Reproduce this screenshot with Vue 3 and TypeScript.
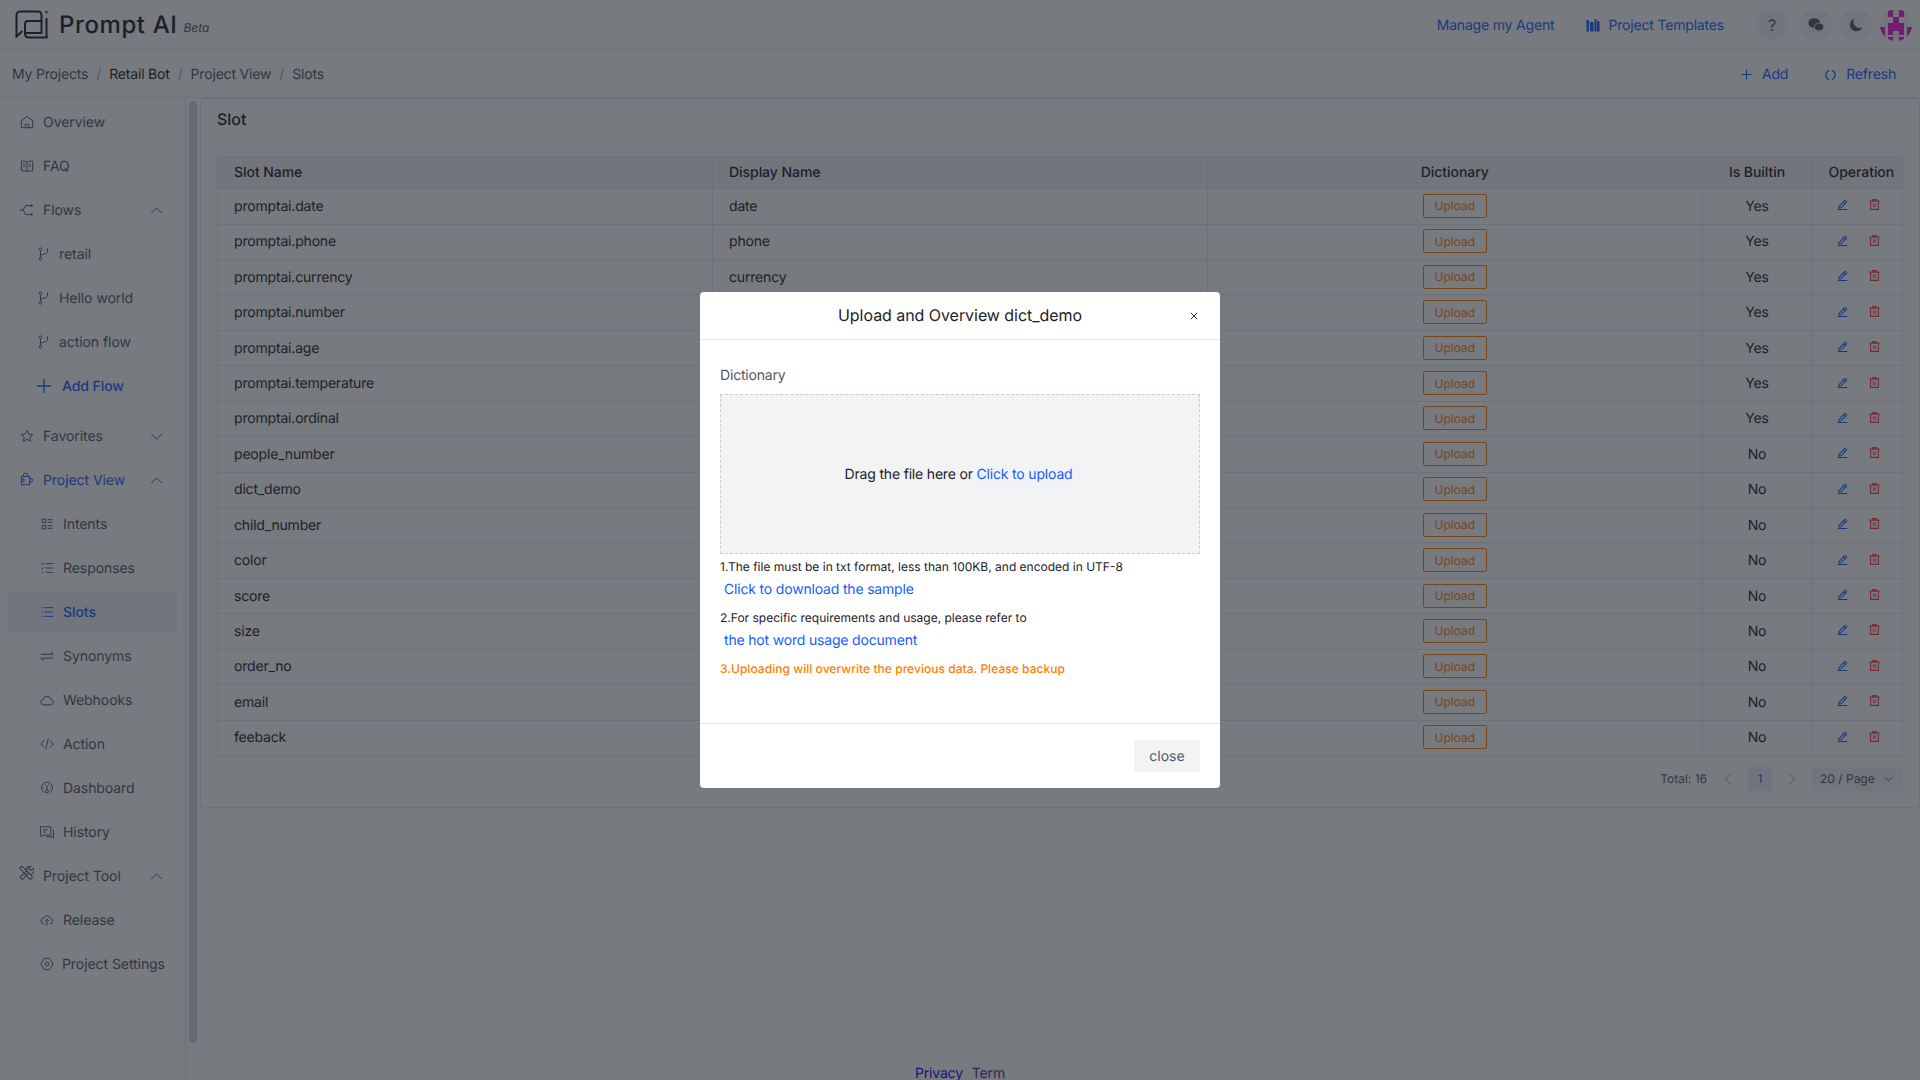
<script setup lang="ts">
interface Slot {
  name: string;
  display: string;
  builtin: boolean;
}

const slots: Slot[] = [
  { name: 'promptai.date', display: 'date', builtin: true },
  { name: 'promptai.phone', display: 'phone', builtin: true },
  { name: 'promptai.currency', display: 'currency', builtin: true },
  { name: 'promptai.number', display: 'number', builtin: true },
  { name: 'promptai.age', display: 'age', builtin: true },
  { name: 'promptai.temperature', display: 'temperature', builtin: true },
  { name: 'promptai.ordinal', display: 'ordinal', builtin: true },
  { name: 'people_number', display: 'people_number', builtin: false },
  { name: 'dict_demo', display: 'dict_demo', builtin: false },
  { name: 'child_number', display: 'child_number', builtin: false },
  { name: 'color', display: 'color', builtin: false },
  { name: 'score', display: 'score', builtin: false },
  { name: 'size', display: 'size', builtin: false },
  { name: 'order_no', display: 'order_no', builtin: false },
  { name: 'email', display: 'email', builtin: false },
  { name: 'feeback', display: 'feeback', builtin: false },
];

const flows = ['retail', 'Hello world', 'action flow'];

const viewItems = [
  { label: 'Intents', icon: 'M2.500 2.500h4v4h-4zM2.500 9.500h4v4h-4zM8.500 3h6M8.500 6h6M8.500 10h6M8.500 13h6' },
  { label: 'Responses', icon: 'M1.500 3l1 1 1.500-2M1.500 8l1 1 1.500-2M6.500 3H15M6.500 8H15M6.500 13H15M2 13h1.500' },
  { label: 'Slots', icon: 'M5 3h10M5 8h10M5 13h10M1.500 3h1.500M1.500 8h1.500M1.500 13h1.500', active: true },
  { label: 'Synonyms', icon: 'M1 6h14l-3-3M15 10.500H1l3 3' },
  { label: 'Webhooks', icon: 'M4.500 13.500a3.200 3.200 0 0 1-.5-6.400 4.200 4.200 0 0 1 8.200 0 3.200 3.200 0 0 1-.5 6.400z' },
  { label: 'Action', icon: 'M4.500 4L1 8l3.500 4M11.500 4L15 8l-3.500 4M9.500 2L6.500 14' },
  { label: 'Dashboard', icon: 'M5 13.200A6.300 6.300 0 1 1 11 13.200M8 5v5M5.500 4v1M3 7.500h1M12 7.500h1M10.500 4v1M8 10a1.700 1.700 0 1 0 0 3.400A1.700 1.700 0 0 0 8 10z' },
  { label: 'History', icon: 'M.5 2h12v9.500H4.500L1.500 13.500l-1-.5zM15.500 5v10l-2-1.500H7M3.500 5.500H9M3.500 8H6.500' },
];
</script>

<template>
  <div class="page">
    <header class="topbar">
      <div class="brand">
        <svg class="brand-logo" viewBox="0 0 36 30" fill="none" stroke="#1d2129" stroke-width="2">
          <path d="M1.500 26V5A3.500 3.500 0 0 1 5 1.500H23A3.500 3.500 0 0 1 26.500 5V24" />
          <path d="M1.500 26v.5L7.500 21" />
          <path d="M10 24V14a3 3 0 0 1 3-3H26.500" />
          <path d="M10 23H26.500" />
          <path d="M10 24a3.500 3.500 0 0 0 3.500 3.500H32.500L31.500 27" />
          <path d="M31.500 8V27.500" />
          <circle cx="31.500" cy="2" r="1.500" fill="#e5383b" stroke="none" />
        </svg>
        <span class="brand-name">Prompt AI</span>
        <span class="brand-tag">Beta</span>
      </div>
      <div class="top-actions">
        <a class="top-link">Manage my Agent</a>
        <a class="top-link templates">
          <svg width="14" height="14" viewBox="0 0 14 14" fill="#165dff">
            <path d="M.5 2h2.500v11.500H.5zM4 4h3.500v9.500H4zM4.800 6h2v1h-2zM8.500 1h2v12.500h-2zM11 3h2.500v10.500H11z" />
          </svg>
          Project Templates
        </a>
        <span class="round-btn q">?</span>
        <span class="round-btn wechat">
          <svg width="16" height="16" viewBox="0 0 16 16" fill="#4e5969">
            <ellipse cx="6.200" cy="6" rx="5.800" ry="4.800" />
            <ellipse cx="11" cy="10" rx="4.800" ry="3.900" stroke="#f2f3f5" stroke-width=".8" />
          </svg>
        </span>
        <span class="round-btn moon">
          <svg width="16" height="16" viewBox="0 0 16 16" fill="#4e5969">
            <path d="M6.500 1.500a6.500 6.500 0 1 0 8 8.500A6 6 0 0 1 6.500 1.500z" />
          </svg>
        </span>
        <svg class="avatar" viewBox="0 0 32 32">
          <clipPath id="avatarClip"><circle cx="16" cy="16" r="16" /></clipPath>
          <g clip-path="url(#avatarClip)">
            <circle cx="16" cy="16" r="16" fill="#f2f2f2" />
            <path fill="#f014d6" d="M8 1h5v7H8zM19 1h5v7h-5zM13 8h6v6h-6zM8 14h16v8H8zM8 22h5v4H8zM19 22h5v4h-5zM0 18h5v10H0zM27 18h5v10h-5zM8 28h5v4H8zM19 28h5v4h-5z" />
          </g>
        </svg>
      </div>
    </header>

    <div class="crumbbar">
      <nav class="crumbs">
        <span>My Projects</span><i>/</i>
        <span class="strong">Retail Bot</span><i>/</i>
        <span>Project View</span><i>/</i>
        <span>Slots</span>
      </nav>
      <div class="crumb-actions">
        <a class="top-link add">
          <svg width="11" height="11" viewBox="0 0 12 12" fill="none" stroke="#165dff" stroke-width="1.100">
            <path d="M6 .5v11M.5 6h11" />
          </svg>
          Add
        </a>
        <a class="top-link refresh">
          <svg width="11" height="12" viewBox="0 0 12 12" fill="none" stroke="#165dff" stroke-width="1.300">
            <path d="M4.500 1.200a5 5 0 0 0 0 9.600M7.500 1.200a5 5 0 0 1 0 9.600" />
          </svg>
          Refresh
        </a>
      </div>
    </div>

    <div class="main">
      <aside class="sidebar">
        <div class="nav-item">
          <svg class="ico" viewBox="0 0 16 16"><path d="M1.500 6.500L8 1.500l6.500 5V14.500h-13zM6 14.500V10.500h4v4" /></svg>
          Overview
        </div>
        <div class="nav-item">
          <svg class="ico" viewBox="0 0 16 16"><path d="M8 3.500C6.500 2.500 4 2.300 1.500 2.500v11c2.500-.2 5 0 6.500 1 1.500-1 4-1.200 6.500-1v-11c-2.500-.2-5 0-6.500 1zM8 3.500V14.500M3.500 6h2.500M3.500 8.500h2.500M10 6h2.500M10 8.500h2.500" /></svg>
          FAQ
        </div>
        <div class="nav-item">
          <svg class="ico wide" viewBox="0 0 16 16"><path d="M0 8h4l3-5h8M4 8l3 5h8M13 1.500L15 3l-2 1.500M13 11.500l2 1.500-2 1.500" /></svg>
          Flows
          <svg class="chev" viewBox="0 0 14 8"><path d="M1 7l6-6 6 6" /></svg>
        </div>
        <div v-for="flow in flows" :key="flow" class="nav-item sub flow">
          <svg class="ico" viewBox="0 0 16 16"><path d="M4 4v8M4 10.500c0-3 8-1.500 8-5.500M2.500 2.500a1.500 1.500 0 1 0 3 0 1.500 1.500 0 1 0-3 0M2.500 13.500a1.500 1.500 0 1 0 3 0 1.500 1.500 0 1 0-3 0M12 1.500V5" /></svg>
          {{ flow }}
        </div>
        <div class="nav-item sub flow add-flow">
          <svg class="plus" viewBox="0 0 14 14"><path d="M7 0v14M0 7h14" /></svg>
          Add Flow
        </div>
        <div class="nav-item favorites">
          <svg class="ico" viewBox="0 0 16 16"><path d="M8 1.500l2 4.300 4.600.6-3.400 3.100.9 4.600L8 11.800 3.900 14l.9-4.600-3.400-3.100 4.600-.6z" /></svg>
          Favorites
          <svg class="chev" viewBox="0 0 14 8"><path d="M1 1l6 6 6-6" /></svg>
        </div>
        <div class="nav-item open">
          <svg class="ico lift" viewBox="0 0 16 16"><path d="M1.500 5h9.500v9.500H1.500zM4 5V3a1.500 1.500 0 0 1 1.500-1.500H7A1.500 1.500 0 0 1 8.500 3v2M11 7.500h1.500a2 2 0 0 1 0 4H11M1.500 8H4.500v3h-3" /></svg>
          Project View
          <svg class="chev" viewBox="0 0 14 8"><path d="M1 7l6-6 6 6" /></svg>
        </div>
        <div
          v-for="item in viewItems"
          :key="item.label"
          class="nav-item sub"
          :class="{ active: item.active }"
        >
          <svg class="ico" viewBox="0 0 16 16"><path :d="item.icon" /></svg>
          {{ item.label }}
        </div>
        <div class="nav-item">
          <svg class="ico tool" viewBox="0 0 16 16"><path d="M2 1L.8 2.500l9.700 10.700a2 2 0 0 0 3-2.700L3.500.5zM15 2.500l-2 2-1.800-.5-.5-1.800 2-2a3.500 3.500 0 0 0-4.200 4.600L1 12l2.500 2.500 6.500-7a3.500 3.500 0 0 0 5-5z" /></svg>
          Project Tool
          <svg class="chev" viewBox="0 0 14 8"><path d="M1 7l6-6 6 6" /></svg>
        </div>
        <div class="nav-item sub">
          <svg class="ico" viewBox="0 0 16 16"><path d="M5 12.500a3.500 3.500 0 0 1-.5-7A4 4 0 0 1 12 6a3.300 3.300 0 0 1-.5 6.500M8 14.500V7M5.800 9.200L8 7l2.200 2.200" /></svg>
          Release
        </div>
        <div class="nav-item sub settings">
          <svg class="ico" viewBox="0 0 16 16"><path d="M5 1.500h6L15 8l-4 6.500H5L1 8zM8 5.800a2.200 2.200 0 1 0 0 4.400 2.200 2.200 0 1 0 0-4.400z" /></svg>
          Project Settings
        </div>
      </aside>
      <div class="scroll-track"><div class="scroll-thumb"></div></div>

      <main class="content">
        <section class="card">
          <h2 class="card-title">Slot</h2>
          <div class="table">
            <div class="row head">
              <div class="cell name">Slot Name</div>
              <div class="cell name">Display Name</div>
              <div class="cell dict center">Dictionary</div>
              <div class="cell builtin center">Is Builtin</div>
              <div class="cell op">Operation</div>
            </div>
            <div v-for="slot in slots" :key="slot.name" class="row">
              <div class="cell name">{{ slot.name }}</div>
              <div class="cell name">{{ slot.display }}</div>
              <div class="cell dict center"><span class="upload">Upload</span></div>
              <div class="cell builtin center">{{ slot.builtin ? 'Yes' : 'No' }}</div>
              <div class="cell op ops">
                <svg class="edit" viewBox="0 0 12 12"><path d="M2.200 8.200L8 2a1.200 1.200 0 0 1 1.700 0l.3.300a1.200 1.200 0 0 1 0 1.700L4.300 9.600l-2.300.4zM7 3.200L8.800 5M.8 11.500h10.400" /></svg>
                <svg class="trash" viewBox="0 0 12 12"><path d="M.5 2.300h11M4 2.200V.7h4V2.200M1.700 2.300v9h8.600v-9" /><path class="trash-fill" d="M4 4.500h4v4.500H4z" /></svg>
              </div>
            </div>
          </div>
          <div class="pager">
            <span class="total">Total: 16</span>
            <svg class="pg-arrow" viewBox="0 0 8 12"><path d="M6.500 1L1.500 6l5 5" /></svg>
            <span class="pg-num">1</span>
            <svg class="pg-arrow" viewBox="0 0 8 12"><path d="M1.500 1l5 5-5 5" /></svg>
            <span class="pg-size">
              20 / Page
              <svg class="pg-chev" viewBox="0 0 12 8"><path d="M1 1.500l5 5 5-5" /></svg>
            </span>
          </div>
        </section>
        <footer class="foot">
          <a class="privacy">Privacy</a>
          <a class="term">Term</a>
        </footer>
      </main>
    </div>

    <div class="mask">
      <div class="modal">
        <div class="modal-head">
          <span class="modal-title">Upload and Overview dict_demo</span>
          <svg class="modal-x" viewBox="0 0 10 10"><path d="M1 1l8 8M9 1l-8 8" /></svg>
        </div>
        <div class="modal-body">
          <div class="field-label">Dictionary</div>
          <div class="drop">
            <span>Drag the file here or <a class="blue">Click to upload</a></span>
          </div>
          <div class="tip first">1.The file must be in txt format, less than 100KB, and encoded in UTF-8</div>
          <a class="doc blue">Click to download the sample</a>
          <div class="tip">2.For specific requirements and usage, please refer to</div>
          <a class="doc blue">the hot word usage document</a>
          <div class="tip warn">3.Uploading will overwrite the previous data. Please backup</div>
        </div>
        <div class="modal-foot">
          <button class="close-btn">close</button>
        </div>
      </div>
    </div>
  </div>
</template>

<style>
html,
body {
  margin: 0;
  overflow: hidden;
}
</style>

<style scoped>
.page {
  position: relative;
  width: 1920px;
  height: 1080px;
  overflow: hidden;
  display: flex;
  flex-direction: column;
  background: #fff;
  font-family: Inter, "Liberation Sans", sans-serif;
  font-size: 14px;
  letter-spacing: -0.18px;
  color: #1d2129;
  text-rendering: geometricPrecision;
}

.topbar {
  height: 50px;
  flex: none;
  box-sizing: border-box;
  display: flex;
  align-items: center;
  justify-content: space-between;
  padding: 0 8px 0 15px;
  border-bottom: 1px solid #e5e6eb;
}

.brand {
  display: flex;
  align-items: center;
}

.brand-logo {
  width: 36px;
  height: 30px;
}

.brand-name {
  margin-left: 8px;
  font-size: 24px;
  font-weight: 500;
  letter-spacing: 0.6px;
}

.brand-tag {
  margin: 6px 0 0 6px;
  font-size: 12px;
  font-style: italic;
  letter-spacing: 0;
  color: #4e5969;
}

.top-actions {
  display: flex;
  align-items: center;
}

.top-link {
  display: inline-flex;
  align-items: center;
  padding-top: 1px;
  color: #165dff;
}

.templates {
  margin-left: 32px;
  gap: 8px;
}

.round-btn {
  width: 32px;
  height: 32px;
  border-radius: 50%;
  background: #f2f3f5;
  display: flex;
  align-items: center;
  justify-content: center;
  color: #4e5969;
}

.q {
  margin-left: 32px;
  font-size: 16px;
}

.wechat {
  margin-left: 12px;
}

.moon {
  margin-left: 8px;
}

.avatar {
  width: 32px;
  height: 32px;
  margin-left: 8px;
}

.crumbbar {
  height: 48px;
  flex: none;
  box-sizing: border-box;
  display: flex;
  align-items: center;
  justify-content: space-between;
  padding: 1px 24px 0 12px;
  border-bottom: 1px solid #e5e6eb;
}

.crumbs {
  display: flex;
  align-items: center;
  color: #4e5969;
}

.crumbs i {
  font-style: normal;
  margin: 0 8px;
  color: #a9aeb8;
}

.crumbs .strong {
  color: #1d2129;
}

.crumb-actions {
  display: flex;
  align-items: center;
  gap: 37px;
}

.add,
.refresh {
  gap: 10px;
}

.main {
  flex: 1;
  min-height: 0;
  display: flex;
}

.sidebar {
  width: 186px;
  flex: none;
  box-sizing: border-box;
  padding: 4px 8px 0;
  border-right: 1px solid #e5e6eb;
  letter-spacing: -0.07px;
}

.nav-item {
  position: relative;
  height: 40px;
  margin-top: 4px;
  box-sizing: border-box;
  padding-left: 12px;
  display: flex;
  align-items: center;
  color: #4e5969;
}

.nav-item:first-child {
  margin-top: 0;
}

.ico {
  width: 14px;
  height: 14px;
  margin-right: 9px;
  flex: none;
  fill: none;
  stroke: currentColor;
  stroke-width: 1.100;
}

.ico.wide {
  width: 15px;
  margin-left: -1px;
}

.ico.lift {
  margin-top: -3px;
}

.ico.tool {
  width: 15px;
  height: 15px;
  margin: -6px 9px 0 -1px;
}

.chev {
  position: absolute;
  right: 14px;
  width: 13px;
  height: 7px;
  fill: none;
  stroke: currentColor;
  stroke-width: 1.100;
}

.sub {
  padding-left: 32px;
}

.sub .ico {
  margin-right: 9px;
}

.flow {
  padding-left: 29px;
}

.flow .ico {
  margin-right: 8px;
}

.add-flow,
.open,
.active {
  color: #165dff;
}

.add-flow {
  font-weight: 500;
}

.plus {
  width: 14px;
  height: 14px;
  margin-right: 11px;
  fill: none;
  stroke: currentColor;
  stroke-width: 1.300;
}

.favorites {
  margin-top: 10px;
}

.active {
  background: #f2f3f5;
  font-weight: 500;
}

.settings .ico {
  margin-right: 8px;
}

.scroll-track {
  width: 14px;
  flex: none;
  box-sizing: border-box;
  padding: 3px 3px 0;
}

.scroll-thumb {
  height: 942px;
  background: #d4d6d9;
  border-radius: 4px;
}

.content {
  flex: 1;
  min-width: 0;
  display: flex;
  flex-direction: column;
}

.card {
  box-sizing: border-box;
  height: 710px;
  flex: none;
  padding: 0 16px;
  border: 1px solid #e5e6eb;
  border-radius: 4px;
}

.card-title {
  margin: 0;
  height: 56.500px;
  padding-top: 8px;
  box-sizing: border-box;
  font-size: 16px;
  font-weight: 500;
  line-height: 24px;
  letter-spacing: 0;
}

.table {
  border: 1px solid #e5e6eb;
  border-bottom: 0;
  border-radius: 4px 4px 0 0;
}

.row {
  display: flex;
  height: 35.430px;
  box-sizing: border-box;
  border-bottom: 1px solid #e5e6eb;
}

.row.head {
  height: 32.700px;
  padding-top: 1px;
  background: #f2f3f5;
  font-weight: 500;
  letter-spacing: -0.05px;
}

.cell {
  box-sizing: border-box;
  display: flex;
  align-items: center;
  padding: 0 16px;
  border-right: 1px solid #e5e6eb;
  white-space: nowrap;
  overflow: hidden;
}

.cell:last-child {
  border-right: 0;
}

.center {
  justify-content: center;
  padding: 0;
}

.name {
  width: 495px;
}

.dict {
  width: 494.500px;
}

.builtin {
  width: 110px;
}

.op {
  flex: 1;
  padding: 0 0 0 16px;
}

.upload {
  box-sizing: border-box;
  width: 64px;
  height: 24px;
  margin-top: -1px;
  border: 1px solid #ff7d00;
  border-radius: 2px;
  color: #ff7d00;
  font-size: 12px;
  font-weight: 400;
  letter-spacing: 0;
  display: flex;
  align-items: center;
  justify-content: center;
}

.ops {
  gap: 21.500px;
  padding: 0 0 3px 24px;
}

.edit {
  width: 11px;
  height: 11px;
  fill: none;
  stroke: #165dff;
  stroke-width: 1.200;
}

.trash {
  width: 11px;
  height: 11px;
  fill: none;
  stroke: #f53f3f;
  stroke-width: 1.200;
}

.trash-fill {
  fill: #f53f3f;
  opacity: 0.5;
  stroke: none;
}

.pager {
  display: flex;
  align-items: center;
  justify-content: flex-end;
  height: 28px;
  margin-top: 9px;
  font-size: 12px;
  letter-spacing: 0;
  color: #4e5969;
}

.total {
  margin-right: 17px;
}

.pg-arrow {
  width: 8px;
  height: 12px;
  fill: none;
  stroke: #a9aeb8;
  stroke-width: 1;
}

.pg-num {
  width: 24px;
  height: 24px;
  margin: 0 16px;
  display: flex;
  align-items: center;
  justify-content: center;
  background: #e8f3ff;
  color: #165dff;
  border-radius: 2px;
}

.pg-size {
  width: 91px;
  height: 24px;
  margin-left: 16px;
  box-sizing: border-box;
  padding: 0 10px 0 8px;
  display: flex;
  align-items: center;
  justify-content: space-between;
  background: #f2f3f5;
  border-radius: 2px;
}

.pg-chev {
  width: 9px;
  height: 6px;
  fill: none;
  stroke: #4e5969;
  stroke-width: 1.100;
}

.foot {
  margin-top: auto;
  height: 16px;
  display: flex;
  justify-content: center;
  gap: 9px;
  margin-right: 200px;
  line-height: 20px;
}

.privacy {
  color: #0000ee;
}

.term {
  color: #551a8b;
}

.mask {
  position: absolute;
  inset: 0;
  background: rgba(29, 33, 41, 0.6);
}

.modal {
  position: absolute;
  left: 700px;
  top: 292px;
  width: 520px;
  height: 496px;
  display: flex;
  flex-direction: column;
  background: #fff;
  border-radius: 4px;
}

.modal-head {
  position: relative;
  height: 48px;
  flex: none;
  box-sizing: border-box;
  display: flex;
  align-items: center;
  justify-content: center;
  border-bottom: 1px solid #e5e6eb;
}

.modal-title {
  font-size: 16px;
  font-weight: 400;
  letter-spacing: -0.05px;
  margin-top: -1px;
}

.modal-x {
  position: absolute;
  right: 22px;
  top: 20px;
  width: 8px;
  height: 8px;
  fill: none;
  stroke: #1d2129;
  stroke-width: 1.200;
}

.modal-body {
  flex: 1;
  padding: 25px 20px 0;
}

.field-label {
  color: #4e5969;
  line-height: 22px;
  margin-bottom: 7px;
}

.drop {
  box-sizing: border-box;
  height: 160px;
  padding-right: 3px;
  display: flex;
  align-items: center;
  justify-content: center;
  background: #f2f3f5;
  border: 1px dashed #c9cdd4;
}

.blue {
  color: #165dff;
}

.tip {
  font-size: 12px;
  line-height: 18px;
  letter-spacing: 0;
  color: #1d2129;
  margin-top: 8.500px;
}

.tip.first {
  margin-top: 4px;
}

.warn {
  color: #ff7d00;
  font-weight: 500;
  letter-spacing: 0.04px;
}

.doc {
  display: block;
  margin: 2.500px 0 0 4px;
  line-height: 22px;
}

.modal-foot {
  height: 65px;
  flex: none;
  box-sizing: border-box;
  padding: 16px 20px;
  display: flex;
  justify-content: flex-end;
  border-top: 1px solid #e5e6eb;
}

.close-btn {
  width: 66px;
  height: 32px;
  border: 0;
  border-radius: 2px;
  background: #f2f3f5;
  color: #4e5969;
  font-family: inherit;
  font-size: 14px;
  text-rendering: geometricPrecision;
}
</style>
